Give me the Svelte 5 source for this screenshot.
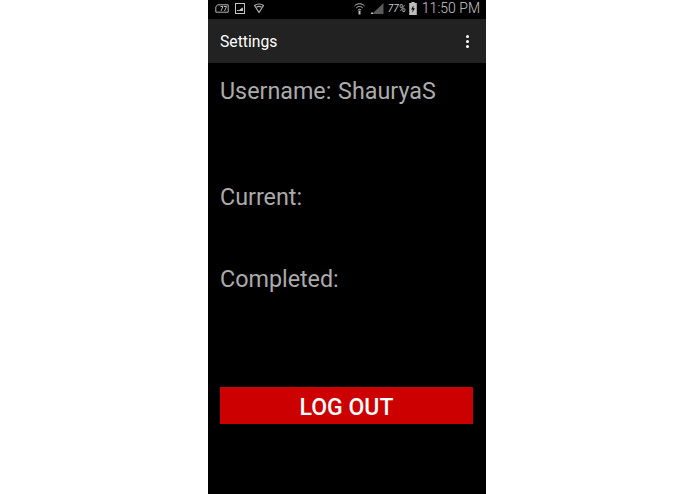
<script>
	let username = 'ShauryaS';
</script>

<div class="page">
	<div class="phone">
		<div class="status">
			<div class="left-icons">
				<svg width="14" height="9" viewBox="0 0 14 9" fill="none" stroke="#b4b4b4" stroke-width="1">
					<path d="M2.5 .8H13.2V8.2H.8V3Z" />
					<path d="M5.5 2.5H8L6 7M9 2.5H11.5L9.5 7" />
				</svg>
				<svg class="pic" width="10" height="11" viewBox="0 0 10 11">
					<rect x=".5" y=".5" width="9" height="10" fill="none" stroke="#c4c4c4" />
					<path d="M2 8V7L4 7.2L6 5.5L8 4.5V8Z" fill="#c4c4c4" />
				</svg>
				<svg class="wifi-l" width="10" height="10" viewBox="0 0 10 10" fill="none" stroke="#b4b4b4" stroke-width="1.1">
					<path d="M.5 2.5C3 .4 7 .4 9.5 2.5L5 9.5Z" />
					<path d="M2.4 4.2C4 3.2 6 3.2 7.6 4.2" />
				</svg>
			</div>
			<div class="right-icons">
				<svg class="wifi" width="11" height="13" viewBox="0 0 11 13" fill="none" stroke="#bdbdbd" stroke-width="1">
					<path d="M.5 4C3 1 8 1 10.5 4" />
					<path d="M2.2 6C4 4 7 4 8.8 6" />
					<path d="M3.8 8C4.8 7 6.2 7 7.2 8" />
					<path d="M5.5 8.5V12.5" stroke-width="2" />
				</svg>
				<svg class="signal" width="13" height="11" viewBox="0 0 13 11">
					<path d="M12.5 0V11H1Z" fill="#5a5a5a" />
					<path d="M0 9.5H2V11H0Z" fill="#bdbdbd" />
				</svg>
				<span class="pct">77%</span>
				<svg class="battery" width="8" height="13" viewBox="0 0 7 12">
					<path d="M2 0H5V1H7V12H0V1H2Z" fill="#bdbdbd" />
					<path d="M4 3L1.8 7H3.3L2.8 10L5.2 5.8H3.7Z" fill="#000" />
				</svg>
				<span class="clock">11:50 PM</span>
			</div>
		</div>

		<header class="toolbar">
			<span class="title">Settings</span>
			<div class="menu" aria-label="More options"><i></i><i></i><i></i></div>
		</header>

		<main class="content">
			<p class="line user">Username: {username}</p>
			<p class="line current">Current:</p>
			<p class="line completed">Completed:</p>
			<button class="logout">LOG OUT</button>
		</main>
	</div>
</div>

<style>
	:global(body) {
		background: #fff;
	}
	.page {
		display: flex;
		justify-content: center;
		width: 695px;
		height: 494px;
		overflow: hidden;
		font-family: Roboto, "Liberation Sans", sans-serif;
	}
	.phone {
		width: 278px;
		height: 494px;
		margin-left: -1px;
		background: #000;
		display: flex;
		flex-direction: column;
	}
	.status {
		height: 19px;
		display: flex;
		justify-content: space-between;
		align-items: center;
		padding: 0 6px 3px 7px;
		box-sizing: border-box;
	}
	.left-icons,
	.right-icons {
		display: flex;
		align-items: center;
	}
	.left-icons {
		gap: 6px;
	}
	.wifi-l {
		margin-left: 3px;
	}
	.right-icons {
		color: #c8c8c8;
	}
	.signal {
		margin-left: 6px;
	}
	.pct {
		font-size: 10px;
		margin-left: 4px;
		font-style: italic;
	}
	.battery {
		margin-left: 3px;
	}
	.clock {
		font-size: 14px;
		font-weight: 300;
		margin-left: 5px;
	}
	.toolbar {
		height: 44px;
		background: #222;
		display: flex;
		align-items: center;
		justify-content: space-between;
		padding: 0 17px 0 12px;
		box-sizing: border-box;
	}
	.title {
		color: #fff;
		font-size: 15.7px;
		font-weight: 400;
	}
	.menu {
		display: flex;
		flex-direction: column;
		gap: 2px;
	}
	.menu i {
		width: 3px;
		height: 3px;
		border-radius: 50%;
		background: #fff;
	}
	.content {
		display: flex;
		flex-direction: column;
		padding: 0 13px 0 12px;
	}
	.line {
		margin: 0;
		color: #ababab;
		font-size: 23.3px;
		line-height: 28px;
		word-spacing: 1px;
	}
	.user {
		margin-top: 14px;
	}
	.current {
		margin-top: 78px;
	}
	.completed {
		margin-top: 54px;
	}
	.logout {
		margin-top: 94px;
		height: 37px;
		border: 0;
		padding: 3px 0 0;
		background: #cc0000;
		color: #fff;
		font-family: inherit;
		font-size: 23px;
		font-weight: 500;
	}
</style>
